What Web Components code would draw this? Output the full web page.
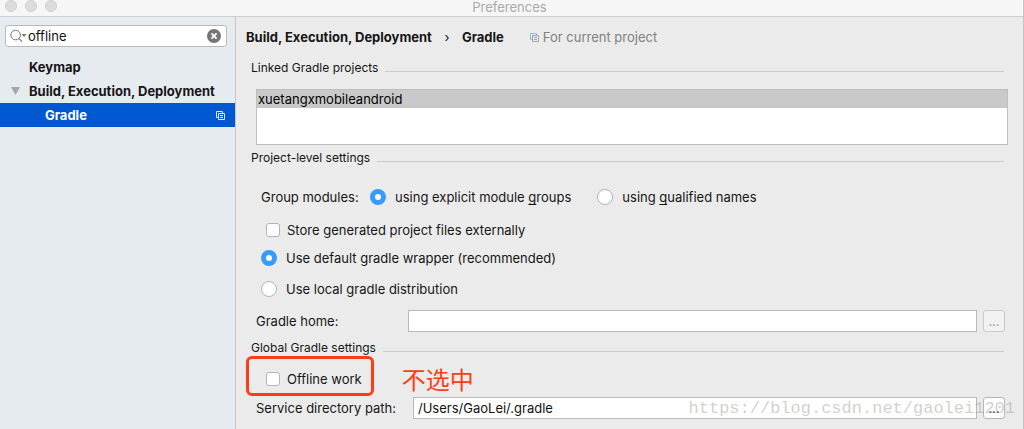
<!DOCTYPE html>
<html lang="en">
<head>
<meta charset="utf-8">
<title>Preferences</title>
<style>
  html, body { margin: 0; min-height: 100%; background: #ebebeb; }
  body { font: 13px/18px Inter, "Noto Sans CJK SC", sans-serif; color: #161616; }
</style>
</head>
<body>
<preferences-window></preferences-window>

<script>
const define = (name, html, setup) => {
  const template = document.createElement('template');
  template.innerHTML = html;
  customElements.define(name, class extends HTMLElement {
    constructor() {
      super();
      this.attachShadow({ mode: 'open' }).append(template.content.cloneNode(true));
    }
    connectedCallback() { if (setup) setup(this, this.shadowRoot); }
  });
};

define('title-bar', `
  <style>
    :host { display: grid; grid-template-columns: 58px 1fr 62px; height: 16px;
            background: #f6f6f6; border-bottom: 1px solid #cfcfcf; color: #aaa; }
    .lights { display: flex; gap: 8px; padding-left: 5px; }
    .lights i { flex: none; width: 10px; height: 10px; border: 1px solid #cecece; border-radius: 50%; background: #dcdcdc; }
    h1 { margin: 0; font: inherit; line-height: 14px; text-align: center; }
  </style>
  <div class="lights"><i></i><i></i><i></i></div>
  <h1><slot></slot></h1>`);

define('search-field', `
  <style>
    :host { display: block; }
    label { display: flex; align-items: center; height: 20px; padding: 0 5px 0 4px; background: #fff;
            border: 1px solid #b9b9b9; border-radius: 3px; }
    svg { display: block; flex: none; }
    input { flex: 1; min-width: 0; border: 0; padding: 0; margin: 0 0 0 1px; outline: 0; background: none; font: inherit; color: #111; }
    button { flex: none; border: 0; padding: 0; background: none; }
  </style>
  <label>
    <svg width="17" height="14" viewBox="0 0 17 14" aria-hidden="true">
      <circle cx="5.6" cy="6" r="4.8" fill="none" stroke="#777"/>
      <path d="M9 9.6l3 3" stroke="#777" stroke-width="1.2"/>
      <path d="M11.5 5h5l-2.5 3z" fill="#777"/>
    </svg>
    <input type="text" aria-label="Search settings" value="offline">
    <button type="button" aria-label="Clear">
      <svg width="14" height="14" viewBox="0 0 14 14">
        <circle cx="7" cy="7" r="7" fill="#757575"/>
        <path d="M4.4 4.4l5.2 5.2M9.6 4.4l-5.2 5.2" stroke="#fff" stroke-width="1.8"/>
      </svg>
    </button>
  </label>`);

define('copy-icon', `
  <style>
    :host { display: block; flex: none; }
    svg { display: block; }
  </style>
  <svg width="9" height="9" viewBox="0 0 9 9" fill="none" aria-hidden="true">
    <path d="M2 6.5H.5v-6h6V2" stroke="var(--back, #8fbdd6)"/>
    <path d="M2.5 2.5h6v6h-6zM4 4.5h3M4 6.5h3" stroke="var(--front, #a3a3a3)"/>
  </svg>`);

define('tree-item', `
  <style>
    :host { display: flex; align-items: center; height: 24px; padding: 0 10px 0 29px; font-weight: 700; white-space: nowrap; }
    :host([level="2"]) { padding-left: 45px; }
    :host([open]) { padding-left: 11px; }
    :host([selected]) { background: #0058d0; color: #fff; --back: #dfe9f8; --front: #dfe9f8; }
    .arrow { display: none; flex: none; margin-right: 9px; }
    :host([open]) .arrow { display: block; }
    .label { flex: 1; }
    copy-icon { display: none; }
    :host([selected]) copy-icon { display: block; }
  </style>
  <svg class="arrow" width="9" height="8" viewBox="0 0 9 8" aria-hidden="true"><path d="M0 0h9L4.5 8z" fill="#a6a6a6"/></svg>
  <span class="label"><slot></slot></span>
  <copy-icon></copy-icon>`);

define('settings-section', `
  <style>
    :host { display: block; }
    h2 { display: flex; align-items: center; gap: 7px; margin: 0 19px 0 15px; height: 22px; font: inherit; font-size: 12px; white-space: nowrap; }
    h2::after { content: ""; flex: 1; height: 1px; margin-top: 6px; background: #cbcbcb; }
  </style>
  <h2><slot name="title"></slot></h2>
  <slot></slot>`);

define('choice-option', `
  <style>
    :host { display: block; }
    label { display: flex; align-items: center; gap: 9px; height: 28px; white-space: nowrap; }
    input { appearance: none; flex: none; box-sizing: border-box; width: 16px; height: 16px; margin: 0;
            border: 1px solid #b3b3b3; background: #fff; border-radius: 50%; }
    input[type=radio]:checked { border: 5px solid #369bfb; }
    :host([type=checkbox]) label { gap: 7px; }
    input[type=checkbox] { width: 14px; height: 14px; border-radius: 3px; border-color: #b5b5b5; }
    input[type=checkbox]:checked { background: #369bfb; }
  </style>
  <label><input><span><slot></slot></span></label>`,
  (host, root) => {
    const input = root.querySelector('input');
    input.type = host.getAttribute('type');
    input.name = host.getAttribute('name');
    input.checked = host.hasAttribute('checked');
    input.addEventListener('change', () => {
      if (input.type !== 'radio') return;
      host.getRootNode().querySelectorAll('choice-option[name="' + input.name + '"]').forEach(other => {
        if (other !== host) other.shadowRoot.querySelector('input').checked = false;
      });
    });
  });

define('path-field', `
  <style>
    :host { display: flex; align-items: center; height: 22px; padding: 0 18px 0 20px; }
    label { flex: none; width: 152px; white-space: nowrap; }
    :host([wide]) label { width: 157px; }
    input { flex: 1; min-width: 0; box-sizing: border-box; height: 22px; margin: 0 6px 0 0; padding: 0 4px;
            border: 1px solid #b9b9b9; background: #fff; font: inherit; color: #111; }
    button { flex: none; box-sizing: border-box; width: 22px; height: 22px; padding: 0; font: inherit;
             border: 1px solid #b5b5b5; border-radius: 3px; background: #fff; color: #333; }
    :host([disabled]) button { background: #f2f2f2; border-color: #c9c9c9; color: #999; }
  </style>
  <label for="path"><slot></slot></label>
  <input id="path" type="text">
  <button type="button" aria-label="Browse">...</button>`,
  (host, root) => {
    root.querySelector('input').value = host.getAttribute('value') || '';
    root.querySelector('button').disabled = host.hasAttribute('disabled');
  });

define('preferences-window', `
  <style>
    :host { display: flex; flex-direction: column; position: relative; min-height: 100vh; box-sizing: border-box; border-right: 1px solid #c4c4c4; }
    .body { flex: 1; display: grid; grid-template-columns: 235px 1fr; }
    aside { background: #e6ebf0; padding-top: 8px; }
    search-field { margin: 0 8px 8px 5px; }
    main { border-left: 1px solid #c6c6c6; padding-bottom: 10px; min-width: 0; }
    nav { display: flex; align-items: center; height: 40px; padding-left: 10px; font-weight: 700; white-space: nowrap; }
    nav .sep { width: 30px; text-align: center; font-weight: 400; }
    nav copy-icon { margin: 0 4px 0 26px; }
    nav .scope { font-weight: 400; color: #808080; }
    ul { list-style: none; margin: 10px 15px 2px 20px; padding: 0; height: 54px; background: #fff; border: 1px solid #bebebe; }
    li { height: 18px; padding-left: 1px; background: #c9c9c9; color: #000; }
    u { text-decoration-skip-ink: none; text-underline-offset: 2px; }
    .modules { display: flex; align-items: center; margin: 14px 0 5px 25px; white-space: nowrap; }
    .modules span { width: 109px; }
    .modules choice-option + choice-option { margin-left: 26px; }
    .inset { margin-left: 30px; }
    .radio { margin-left: 25px; }
    .local { margin: 3px 0 7px 25px; }
    .global { margin-top: 5px; }
    .offline { display: flex; align-items: center; position: relative; margin: 6px 0 4px; padding-left: 30px; height: 28px; }
    .frame { position: absolute; left: 10px; top: -9px; width: 122px; height: 34px; border: 3px solid #fc3d15; border-radius: 6px; }
    .note { margin-left: 40px; font-size: 24px; line-height: 28px; color: #fc3d15; font-family: "Noto Sans CJK SC", sans-serif; }
    .watermark { position: absolute; right: 8px; bottom: 10px; font: 17px/20px "Liberation Mono", monospace;
                 color: rgba(150, 150, 135, .45); pointer-events: none; }
  </style>
  <title-bar>Preferences</title-bar>
  <div class="body">
    <aside>
      <search-field></search-field>
      <tree-item>Keymap</tree-item>
      <tree-item open>Build, Execution, Deployment</tree-item>
      <tree-item level="2" selected>Gradle</tree-item>
    </aside>
    <main>
      <nav><span>Build, Execution, Deployment</span><span class="sep">›</span><span>Gradle</span><copy-icon></copy-icon><span class="scope">For current project</span></nav>
      <settings-section>
        <span slot="title">Linked Gradle projects</span>
        <ul><li>xuetangxmobileandroid</li></ul>
      </settings-section>
      <settings-section>
        <span slot="title">Project-level settings</span>
        <div class="modules">
          <span>Group modules:</span>
          <choice-option type="radio" name="modules" checked>using explicit module <u>g</u>roups</choice-option>
          <choice-option type="radio" name="modules">using <u>q</u>ualified names</choice-option>
        </div>
        <choice-option class="inset" type="checkbox" name="external">Store generated project files externally</choice-option>
        <choice-option class="radio" type="radio" name="distribution" checked>Use default gradle wrapper (recommended)</choice-option>
        <choice-option class="local" type="radio" name="distribution">Use local gradle distribution</choice-option>
        <path-field disabled>Gradle home:</path-field>
      </settings-section>
      <settings-section class="global">
        <span slot="title">Global Gradle settings</span>
        <div class="offline">
          <choice-option type="checkbox" name="offline">Offline work</choice-option>
          <div class="frame"></div>
          <span class="note" lang="zh-CN">不选中</span>
        </div>
        <path-field wide value="/Users/GaoLei/.gradle">Service directory path:</path-field>
      </settings-section>
    </main>
  </div>
  <div class="watermark">https://blog.csdn.net/gaolei1201</div>`);
</script>
</body>
</html>
